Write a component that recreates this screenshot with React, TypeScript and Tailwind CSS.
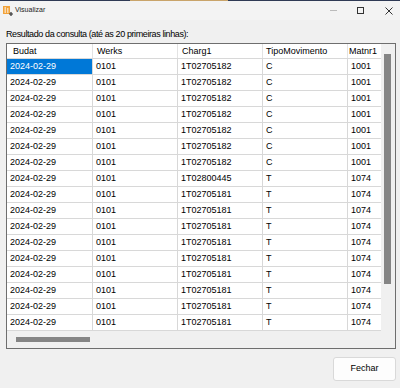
const cols = [
  { name: 'Budat', w: 'w-[86px]', hp: 'pl-[6px]' },
  { name: 'Werks', w: 'w-[85px]', hp: 'pl-[4px]' },
  { name: 'Charg1', w: 'w-[85px]', hp: 'pl-[4px]' },
  { name: 'TipoMovimento', w: 'w-[85px]', hp: 'pl-[3px]' },
  { name: 'Matnr1', w: 'w-[34px]', hp: 'pl-[1px]' },
];

const rows = [
  ...Array(7).fill(['2024-02-29', '0101', '1T02705182', 'C', '1001']),
  ['2024-02-29', '0101', '1T02800445', 'T', '1074'],
  ...Array(9).fill(['2024-02-29', '0101', '1T02705181', 'T', '1074']),
] as string[][];

export default function App() {
  return (
    <div className="w-[400px] h-[388px] bg-[#f0f0f0] flex flex-col overflow-hidden font-['Liberation_Sans',sans-serif] text-black">
      {/* title bar */}
      <div className="h-px flex shrink-0">
        <div className="w-[130px] bg-[#2f3a55]" />
        <div className="w-[98px] bg-[#c9a46a]" />
        <div className="flex-1 bg-[#2f3a55]" />
      </div>
      <div className="h-[19px] bg-[#f3f3f3] flex items-center shrink-0">
        <svg width="10" height="10" viewBox="0 0 10 10" className="ml-[3px]">
          <rect x="0" y="0" width="7" height="8" fill="#f2a33a" />
          <rect x="1.5" y="1" width="1.5" height="6" fill="#fff" opacity="0.6" />
          <rect x="4" y="2" width="1.5" height="5" fill="#fff" opacity="0.6" />
          <path d="M6 8h4M8 6v4" stroke="#333" strokeWidth="1.2" />
        </svg>
        <span className="ml-[2px] text-[7px] text-[#222]">Visualizar</span>
        <div className="flex-1" />
        <span className="w-[7px] h-px bg-[#bbb] mr-[20px]" />
        <span className="w-[7px] h-[7px] border border-[#333] mr-[21px]" />
        <svg width="8" height="8" viewBox="0 0 8 8" className="mr-[7px]">
          <path d="M0.5 0.5l7 7M7.5 0.5l-7 7" stroke="#333" strokeWidth="1" />
        </svg>
      </div>

      <div className="pl-[6px] pt-[7px] text-[9px] tracking-[-0.4px] leading-[14px]">
        Resultado da consulta (até as 20 primeiras linhas):
      </div>

      {/* grid */}
      <div className="mr-[4px] ml-[6px] mt-[2px] h-[306px] border border-[#6e6e6e] bg-[#f0f0f0] flex overflow-hidden">
        <div className="flex-1 flex flex-col overflow-hidden">
          <div className="flex-1 overflow-hidden">
            <div className="flex h-[14px] bg-white">
              {cols.map((c) => (
                <div key={c.name} className={`${c.w} ${c.hp} shrink-0 border-r border-[#e3e3e3] text-[9px] leading-[14px] whitespace-nowrap overflow-hidden`}>
                  {c.name}
                </div>
              ))}
            </div>
            {[...rows, ['', '', '', '', '']].map((r, i) => (
              <div key={i} className="flex h-[16px] bg-white border-t border-[#d8d8d8]">
                {r.map((v, j) => (
                  <div
                    key={j}
                    className={`${cols[j].w} shrink-0 border-r border-[#d8d8d8] pl-[3px] text-[9px] leading-[15px] whitespace-nowrap overflow-hidden ${i === 0 && j === 0 ? 'bg-[#0078d7] text-white' : ''}`}
                  >
                    {v}
                  </div>
                ))}
              </div>
            ))}
          </div>
          <div className="h-[17px] shrink-0 flex items-center pl-[9px]">
            <div className="w-[74px] h-[5px] bg-[#858585]" />
          </div>
        </div>
        <div className="w-[14px] shrink-0 pt-[10px] pl-[3px]">
          <div className="w-[7px] h-[230px] bg-[#858585]" />
        </div>
      </div>

      <div className="flex justify-end pr-[4px] pt-[8px]">
        <button className="w-[63px] h-[24px] bg-[#fdfdfd] border border-[#d9d9d9] rounded-[3px] text-[9px]">
          Fechar
        </button>
      </div>
    </div>
  );
}
